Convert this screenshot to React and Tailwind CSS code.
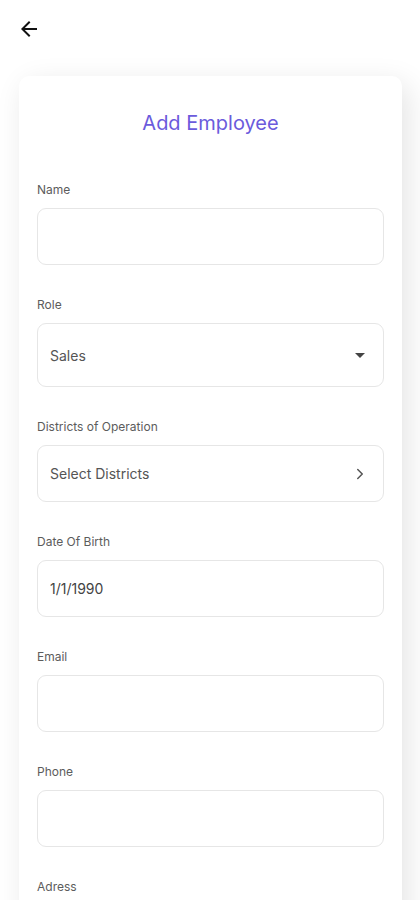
import React from "react";
import { MdArrowBack, MdArrowDropDown } from "react-icons/md";
import { ChevronRight } from "lucide-react";

// single form field: small label above a rounded box
const Field = ({ label, children, tall }) => (
  <div className="flex flex-col">
    <label className="h-4 text-[12px] leading-4 text-[#5c5c5c]">{label}</label>
    <div
      className={`mt-[10px] flex items-center justify-between rounded-[9px] border border-[#e6e6e6] bg-white pl-[12px] pr-[12px] ${
        tall ? "h-[64px]" : "h-[57px]"
      }`}
    >
      {children}
    </div>
  </div>
);

const App = () => {
  const fields = [
    { label: "Name" },
    {
      label: "Role",
      tall: true,
      content: (
        <>
          <span className="text-[14px] text-[#555]">Sales</span>
          <MdArrowDropDown size={24} className="text-[#444] -mr-[1px]" />
        </>
      ),
    },
    {
      label: "Districts of Operation",
      content: (
        <>
          <span className="text-[14px] text-[#555]">Select Districts</span>
          <ChevronRight size={18} strokeWidth={2} className="text-[#555] mr-[2px]" />
        </>
      ),
    },
    {
      label: "Date Of Birth",
      content: <span className="text-[14px] text-[#444]">1/1/1990</span>,
    },
    { label: "Email" },
    { label: "Phone" },
    { label: "Adress" },
  ];

  return (
    <div
      className="min-h-screen w-full overflow-hidden bg-white"
      style={{ fontFamily: "Inter, 'Noto Sans', sans-serif" }}
    >
      <div className="h-[76px] pl-[17px] pt-[17px]">
        <MdArrowBack size={24} className="text-[#111]" />
      </div>
      <div className="ml-[19px] mr-[18px] rounded-[10px] bg-white px-[18px] pt-[33px] pb-10 shadow-[6px_8px_30px_rgba(0,0,0,0.11)]">
        <h1 className="text-center text-[20px] leading-7 text-[#6b5bdc]">
          Add Employee
        </h1>
        <div className="mt-[45px] flex flex-col gap-[32px]">
          {fields.map((f) => (
            <Field key={f.label} label={f.label} tall={f.tall}>
              {f.content}
            </Field>
          ))}
        </div>
      </div>
    </div>
  );
};

export default App;
